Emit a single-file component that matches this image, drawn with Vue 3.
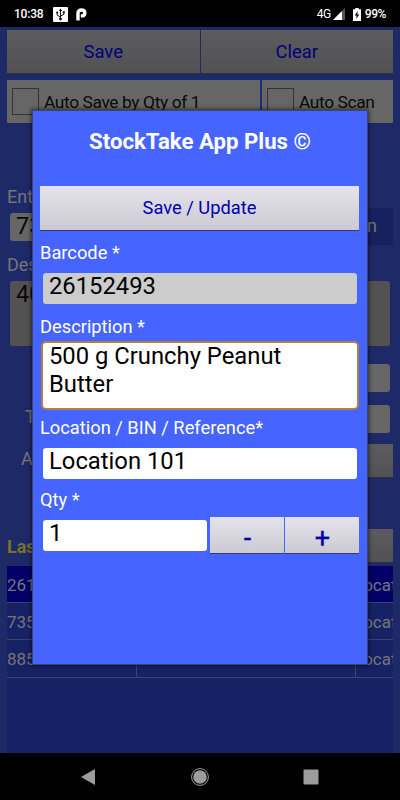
<template>
  <div class="screen">
    <div class="statusBar">
      <span class="clock">10:38</span>
      <svg class="usb" width="15" height="15" viewBox="0 0 15 15">
        <rect width="15" height="15" rx="1" fill="#fff" />
        <path d="M7.5 12V3M7.5 10L4.2 8.2V6M7.5 9L10.8 7.4V5" fill="none" stroke="#111" stroke-width="1" />
        <path d="M5.8 4L7.5 1.5L9.2 4Z" fill="#111" />
        <circle cx="4.2" cy="5.6" r="1.1" fill="#111" />
        <rect x="9.8" y="4.2" width="2" height="2" fill="#111" />
        <circle cx="7.5" cy="12" r="1.4" fill="#111" />
      </svg>
      <svg class="parking" width="11" height="13" viewBox="0 0 11 13">
        <path d="M2 12.6V5.2C2 3 3.5 2 5.4 2C7.4 2 8.8 3.2 8.8 4.9C8.8 6.8 7.4 7.9 5.3 7.9H4.8" fill="none" stroke="#fff" stroke-width="3.4" />
      </svg>
      <span class="network">4G</span>
      <svg class="signal" width="13" height="12" viewBox="0 0 13 12">
        <path d="M0 12L12 0V12Z" fill="#555" />
        <path d="M0 12L9 3V12Z" fill="#fff" />
      </svg>
      <svg class="battery" width="8" height="13" viewBox="0 0 8 13">
        <path d="M2.3 0H5.7V1.3H8V13H0V1.3H2.3Z" fill="#fff" />
        <path d="M4.7 3L1.7 7.4H3.7L3.2 11L6.3 6.4H4.3Z" fill="#000" />
      </svg>
      <span class="percent">99%</span>
    </div>

    <div class="page">
      <div class="buttons">
        <div class="dimButton">Save</div>
        <div class="dimButton">Clear</div>
      </div>
      <div class="checks">
        <div class="check autoSave"><i class="box"></i>Auto Save by Qty of 1</div>
        <div class="check autoScan"><i class="box"></i>Auto Scan</div>
      </div>
      <div class="pageLabel enter">Enter</div>
      <div class="barcodeRow">
        <div class="pageInput">73</div>
        <div class="scan">n</div>
      </div>
      <div class="pageLabel desc">Desc</div>
      <div class="pageInput area">40</div>
      <div class="pageInput short"></div>
      <div class="formRow total">
        <span>T</span>
        <div class="pageInput"></div>
      </div>
      <div class="formRow amount">
        <span>A</span>
        <div class="dimButton"></div>
      </div>
      <div class="lastRow">
        <span>Last</span>
        <div class="dimButton"></div>
      </div>
      <div class="list">
        <div class="listRow" v-for="(item, index) in items" :key="item" :class="{ selected: index === 0 }">
          <div class="cell code">{{ item }}</div>
          <div class="cell name"></div>
          <div class="cell place"><span>Locat</span></div>
        </div>
      </div>
    </div>

    <div class="navBar">
      <svg width="16" height="18" viewBox="0 0 16 18"><path d="M1 9L15 1V17Z" fill="#9c9c9c" /></svg>
      <svg width="20" height="20" viewBox="0 0 20 20">
        <circle cx="10" cy="10" r="8.4" fill="none" stroke="#9c9c9c" stroke-width="1" />
        <circle cx="10" cy="10" r="6.8" fill="#9c9c9c" />
      </svg>
      <svg class="recent" width="16" height="16" viewBox="0 0 16 16"><rect x=".5" y=".5" width="15" height="15" rx="1" fill="#9c9c9c" /></svg>
    </div>

    <div class="dialog">
      <div class="title">StockTake App Plus ©</div>
      <button class="button save">Save / Update</button>
      <label class="label barcode">Barcode *</label>
      <div class="input readonly">{{ form.barcode }}</div>
      <label class="label description">Description *</label>
      <div class="input focused">
        <div class="text">{{ form.description }}</div>
      </div>
      <label class="label location">Location / BIN / Reference*</label>
      <div class="input">{{ form.location }}</div>
      <label class="label qty">Qty *</label>
      <div class="qtyRow">
        <div class="input">{{ form.qty }}</div>
        <button class="button step" @click="form.qty--">-</button>
        <button class="button step" @click="form.qty++">+</button>
      </div>
    </div>
  </div>
</template>

<script setup>
import { reactive } from "vue";
const items = ["261", "735", "885"];
const form = reactive({
  barcode: "26152493",
  description: "500 g Crunchy Peanut Butter",
  location: "Location 101",
  qty: 1,
});
</script>

<style>
body {
  margin: 0;
  background: #000;
}
</style>

<style scoped>
* {
  box-sizing: border-box;
}

.screen {
  position: relative;
  display: flex;
  flex-direction: column;
  width: 400px;
  height: 800px;
  overflow: hidden;
  background: #000;
  font-family: Roboto, "Liberation Sans", sans-serif;
}

.statusBar {
  display: flex;
  align-items: center;
  height: 27px;
  padding: 1px 14px 0 14px;
  color: #fff;
  font-size: 12px;
  font-weight: 500;
}

.clock {
  width: 39px;
  letter-spacing: -0.2px;
  white-space: nowrap;
}

.parking {
  margin-left: 8px;
}

.network {
  margin-left: auto;
  font-weight: 400;
  letter-spacing: -0.5px;
}

.signal {
  margin: 0 7px 0 2px;
}

.percent {
  margin-left: 4px;
  letter-spacing: -0.4px;
}

/* 弹窗后面的页面 */
.page {
  display: flex;
  flex-direction: column;
  height: 726px;
  padding: 3px 7px 0;
  background: #1e2968;
  color: #75757b;
  font-size: 18px;
}

.buttons {
  display: flex;
  gap: 1px;
  height: 44px;
}

.dimButton {
  flex: 1;
  display: flex;
  align-items: center;
  justify-content: center;
  padding-bottom: 1px;
  background: linear-gradient(#5c5c5e, #525254);
  border-bottom: 1px solid #303038;
  color: #00007c;
  font-size: 18.4px;
}

.checks {
  display: flex;
  gap: 2px;
  height: 43px;
  margin-top: 6px;
  background: #1c2c7c;
}

.check {
  display: flex;
  align-items: center;
  gap: 5px;
  padding-left: 5px;
  background: #666;
  color: #080808;
  font-size: 17.4px;
  letter-spacing: -0.4px;
  white-space: nowrap;
}

.autoSave {
  width: 253px;
}

.autoScan {
  flex: 1;
}

.box {
  width: 27px;
  height: 27px;
  border: 1px solid #333;
}

.pageLabel {
  height: 24px;
  line-height: 24px;
}

.enter {
  margin-top: 62px;
}

.barcodeRow {
  display: flex;
  align-items: center;
  height: 37px;
  margin-top: -1px;
}

.pageInput {
  width: 200px;
  height: 28px;
  margin-left: 3px;
  padding-left: 6px;
  border-radius: 3px;
  background: #666;
  color: #080808;
  font-size: 23.5px;
  line-height: 26px;
}

.scan {
  flex: 1;
  height: 37px;
  padding-right: 16px;
  background: #172160;
  line-height: 36px;
  text-align: right;
}

.desc {
  margin-top: 8px;
}

.area {
  width: 380px;
  height: 65px;
  margin-top: 4px;
  background: #525252;
}

.short {
  align-self: flex-end;
  margin: 18px 3px 0 0;
}

.formRow {
  display: flex;
  align-items: center;
  justify-content: space-between;
}

.total {
  margin-top: 13px;
  padding: 0 3px 0 18px;
}

.total span {
  margin-top: -6px;
}

.amount {
  height: 34px;
  margin-top: 11px;
  padding-left: 14px;
}

.amount .dimButton,
.lastRow .dimButton {
  flex: none;
  width: 180px;
  height: 34px;
}

.amount span {
  margin-top: -5px;
}

.lastRow {
  display: flex;
  align-items: center;
  justify-content: space-between;
  height: 34px;
  margin-top: 51px;
  color: #77732b;
  font-weight: 700;
}

.list {
  height: 187px;
  margin-top: 3px;
  background: #172264;
  font-size: 17px;
}

.listRow {
  display: flex;
  height: 37px;
  border-bottom: 1px solid #3c4470;
}

.listRow:last-child {
  height: 38px;
}

.selected {
  background: #000068;
}

.cell {
  flex: none;
  overflow: hidden;
  border-right: 1px solid #3c4470;
  line-height: 38px;
}

.code {
  width: 130px;
}

.name {
  width: 219px;
}

.place {
  width: 37px;
  border-right: none;
}

.place span {
  margin-left: -2px;
}

.navBar {
  display: flex;
  align-items: center;
  gap: 94px;
  height: 47px;
  padding-left: 80px;
}

.recent {
  margin-left: -1px;
}

/* 编辑弹窗 */
.dialog {
  position: absolute;
  top: 110px;
  left: 32px;
  display: flex;
  flex-direction: column;
  width: 336px;
  height: 555px;
  padding: 0 8px 0 7px;
  border: 1px solid #39456f;
  background: #4664ff;
  box-shadow: 0 0 4px 1px rgba(0, 0, 0, 0.55);
  color: #fff;
}

.title {
  height: 75px;
  padding-top: 17px;
  padding-left: 1px;
  font-size: 22.2px;
  font-weight: 700;
  line-height: 26px;
  text-align: center;
  white-space: nowrap;
}

.button {
  flex: none;
  padding: 0 0 2px;
  border: none;
  border-bottom: 1px solid #303a78;
  background: linear-gradient(#e4e3ec, #d8d7df 50%, #cbcad3);
  color: #0000ac;
  font-family: inherit;
  font-size: 18.3px;
}

.save {
  height: 45px;
}

.label {
  height: 24px;
  font-size: 18.3px;
  line-height: 24px;
  white-space: nowrap;
}

.barcode {
  margin-top: 10px;
}

.input {
  height: 31px;
  margin: 0 2px 0 3px;
  padding-left: 6px;
  border-radius: 3px;
  background: #fff;
  color: #000;
  font-size: 23.8px;
  line-height: 27px;
}

.readonly {
  margin-top: 8px;
  background: #ccc;
  line-height: 26px;
}

.description {
  margin-top: 11px;
}

.focused {
  height: 69px;
  margin: 2px 0 1px 1px;
  padding: 0 50px 0 6px;
  border: 2px solid #b08040;
  border-radius: 5px;
  line-height: 28px;
}

.text {
  margin-top: -1px;
}

.location {
  margin-top: 5px;
  margin-bottom: 8px;
}

.qty {
  margin-top: 9px;
}

.qtyRow {
  display: flex;
  gap: 1px;
  height: 37px;
  margin-top: 5px;
}

.qtyRow .input {
  width: 164px;
  margin: 3px 2px 0 3px;
  line-height: 27px;
}

.step {
  flex: 1;
  padding-top: 6px;
  padding-left: 1px;
  font-size: 27px;
  line-height: 30px;
  -webkit-text-stroke: 0.3px #0000ac;
}
</style>
